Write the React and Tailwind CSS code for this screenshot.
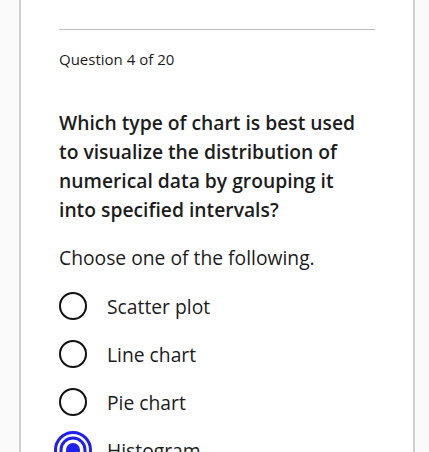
import React from 'react';

const options = ['Scatter plot', 'Line chart', 'Pie chart', 'Histogram'];

const Radio = ({checked}) => {
  if (checked) {
    return (
      <svg width="40" height="40" viewBox="0 0 40 40" className="-ml-[6px] -mr-[6px] shrink-0">
        <circle cx="20" cy="20" r="17.5" fill="none" stroke="#1f1fee" strokeWidth="3" />
        <circle cx="20" cy="20" r="12" fill="none" stroke="#1f1fee" strokeWidth="3" />
        <circle cx="20" cy="20" r="7" fill="#1f1fee" />
      </svg>
    );
  }
  return <span className="block w-[28px] h-[28px] rounded-full border-[2.5px] border-[#111] shrink-0" />;
};

export default function App() {
  return (
    <div
      className="h-[452px] bg-[#fafafa] overflow-hidden"
      style={{fontFamily: '"Open Sans", "Noto Sans", sans-serif'}}>
      <div className="ml-[19px] w-[396px] h-full bg-white border-x-2 border-[#d0d0d0] pl-[38px] pr-[37px] pt-[29px] text-[#1c1c1c]">
        <div className="h-px bg-[#bdbdbd] w-[316px]" />
        <div className="mt-[19px] text-[15px] leading-[20px] font-medium">Question 4 of 20</div>
        <h2 className="mt-[39px] max-w-[305px] text-[19.3px] leading-[29px] font-semibold">
          Which type of chart is best used to visualize the distribution of numerical data by grouping it into
          specified intervals?
        </h2>
        <p className="mt-[19px] text-[19.3px] leading-[29px]">Choose one of the following.</p>
        <div className="mt-[10px]">
          {options.map((opt, i) => (
            <label key={opt} className="flex items-center h-[48px] gap-[20px]">
              <Radio checked={i === 3} />
              <span className="text-[19.3px] leading-[29px]">{opt}</span>
            </label>
          ))}
        </div>
      </div>
    </div>
  );
}
